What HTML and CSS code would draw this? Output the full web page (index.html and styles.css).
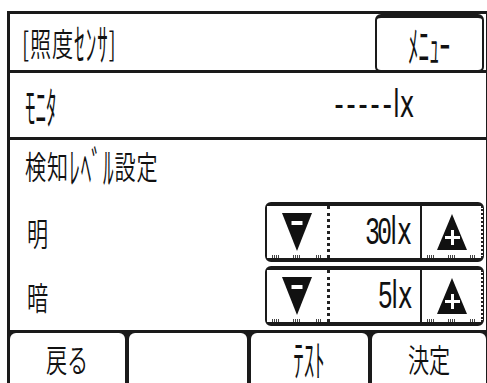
FILE: index.html
```html
<!DOCTYPE html>
<html lang="ja">
<head>
<meta charset="utf-8">
<title>照度センサ</title>
<link rel="stylesheet" href="styles.css">
</head>
<body>
<div class="frame">
  <header class="head">
    <div class="title"><span class="t">[照度<span class="k">ｾﾝｻ</span>]</span></div>
    <button class="menu"><span class="t c"><span class="k">ﾒﾆｭｰ</span></span></button>
  </header>
  <div class="monitor">
    <span class="t"><span class="k">ﾓﾆﾀ</span></span>
    <span class="t r"><span class="m">-----</span><span class="u">lx</span></span>
  </div>
  <section class="detect">
    <div class="label"><span class="t">検知<span class="k">ﾚﾍﾞﾙ</span>設定</span></div>
    <div class="level first">
      <span class="t">明</span>
      <div class="stepper">
        <button class="btn down"><svg width="30" height="38" viewBox="0 0 30 38"><polygon points="0,0 30,0 15,38" fill="#111"/><rect x="9.5" y="8" width="11" height="4" fill="#fff"/></svg></button>
        <div class="val"><span class="t r"><span class="m">30</span><span class="u">lx</span></span></div>
        <button class="btn up"><svg width="30" height="36" viewBox="0 0 30 36"><polygon points="15,0 30,36 0,36" fill="#111"/><rect x="8" y="22" width="15" height="3" fill="#fff"/><rect x="14" y="16" width="3" height="15" fill="#fff"/></svg></button>
      </div>
    </div>
    <div class="level">
      <span class="t">暗</span>
      <div class="stepper">
        <button class="btn down"><svg width="30" height="38" viewBox="0 0 30 38"><polygon points="0,0 30,0 15,38" fill="#111"/><rect x="9.5" y="8" width="11" height="4" fill="#fff"/></svg></button>
        <div class="val"><span class="t r"><span class="m">5</span><span class="u">lx</span></span></div>
        <button class="btn up"><svg width="30" height="36" viewBox="0 0 30 36"><polygon points="15,0 30,36 0,36" fill="#111"/><rect x="8" y="22" width="15" height="3" fill="#fff"/><rect x="14" y="16" width="3" height="15" fill="#fff"/></svg></button>
      </div>
    </div>
  </section>
  <nav class="tabs">
    <div class="tab"><span class="t c">戻る</span></div>
    <div class="tab"></div>
    <div class="tab"><span class="t c tall">ﾃｽﾄ</span></div>
    <div class="tab"><span class="t c">決定</span></div>
  </nav>
</div>
</body>
</html>
```
FILE: styles.css
```css
* {
  box-sizing: border-box;
  margin: 0;
  padding: 0;
}
html, body {
  width: 487px;
  height: 383px;
  overflow: hidden;
  background: #fff;
}
body {
  font-family: "Noto Sans CJK JP", sans-serif;
  font-weight: 350;
  color: #111;
}
.frame {
  margin: 11px 0 0 7px;
  width: 482px;
  border: 3px solid #1a1a1a;
  border-bottom: 0;
  display: flex;
  flex-direction: column;
}
.t {
  display: inline-block;
  font-size: 32px;
  line-height: 32px;
  white-space: nowrap;
  transform: scaleX(0.66);
  transform-origin: left center;
}
.t.r { transform-origin: right center; }
.t.c { transform-origin: center center; }
.t.tall {
  line-height: 24px;
  transform: scale(0.66, 1.38);
  transform-origin: 50% 55%;
}
.k {
  display: inline-block;
  line-height: 24px;
  transform: scaleY(1.38);
  transform-origin: 50% 55%;
}
.m {
  font-family: "Liberation Mono", monospace;
  font-size: 38px;
  font-weight: 400;
  letter-spacing: -4.6px;
}
.u {
  font-family: "DejaVu Sans", sans-serif;
  font-size: 37px;
  font-weight: 400;
  margin-left: 2px;
}
.u::first-letter { letter-spacing: 2px; }
.head {
  display: flex;
  height: 59px;
  border-bottom: 3px solid #1a1a1a;
}
.title {
  flex: 1;
  display: flex;
  align-items: center;
  padding-left: 12px;
  letter-spacing: 1.5px;
}
.menu {
  width: 109px;
  height: 59px;
  margin-right: 2px;
  margin-bottom: -3px;
  border: 2px solid #1a1a1a;
  border-top-width: 4px;
  border-bottom-width: 3px;
  border-radius: 6px;
  background: #fff;
  color: inherit;
  font: inherit;
  display: flex;
  align-items: center;
  justify-content: center;
  position: relative;
}
.monitor {
  height: 67px;
  border-bottom: 3px solid #1a1a1a;
  display: flex;
  align-items: center;
  justify-content: space-between;
  padding: 0 72px 0 15px;
}
.label {
  height: 50px;
  display: flex;
  align-items: center;
  padding-left: 15px;
  letter-spacing: 1.5px;
}
.level {
  display: flex;
  align-items: center;
  height: 60px;
  padding-left: 17px;
  margin-top: 4px;
}
.level.first { margin-top: 12px; }
.detect { padding-bottom: 4px; }
.stepper {
  margin-left: auto;
  margin-right: 2px;
  width: 219px;
  height: 60px;
  display: flex;
  border: 2px solid #1a1a1a;
  border-top-width: 4px;
  border-bottom-width: 4px;
  border-right-width: 1px;
  border-radius: 6px;
  background: #fff;
}
.btn {
  position: relative;
  border: 0;
  background: #fff;
  display: flex;
  align-items: center;
  justify-content: center;
}
.btn::after {
  content: "";
  position: absolute;
  left: 5px;
  right: 5px;
  bottom: 0;
  height: 3px;
  background:
    repeating-linear-gradient(90deg, #444 0 1px, transparent 1px 2px) left bottom / 8px 3px no-repeat,
    repeating-linear-gradient(90deg, #444 0 1px, transparent 1px 2px) center bottom / 8px 3px no-repeat,
    repeating-linear-gradient(90deg, #444 0 1px, transparent 1px 2px) right bottom / 6px 3px no-repeat;
}
.down {
  width: 63px;
  border-right: 3px dotted #222;
}
.up {
  width: 63px;
  border-left: 2px solid #1a1a1a;
  border-right: 2px dotted #222;
}
.val {
  flex: 1;
  display: flex;
  align-items: center;
  justify-content: flex-end;
  padding-right: 8px;
}
.tabs {
  display: grid;
  grid-template-columns: 115px 118px 117px 1fr;
  column-gap: 4px;
  padding-top: 3px;
  background: #1a1a1a;
  height: 53px;
}
.tab {
  background: #fff;
  border-radius: 6px 6px 0 0;
  display: flex;
  justify-content: center;
  align-items: flex-start;
  padding-top: 9px;
}
.tab .tall { margin-top: 4px; }
```
